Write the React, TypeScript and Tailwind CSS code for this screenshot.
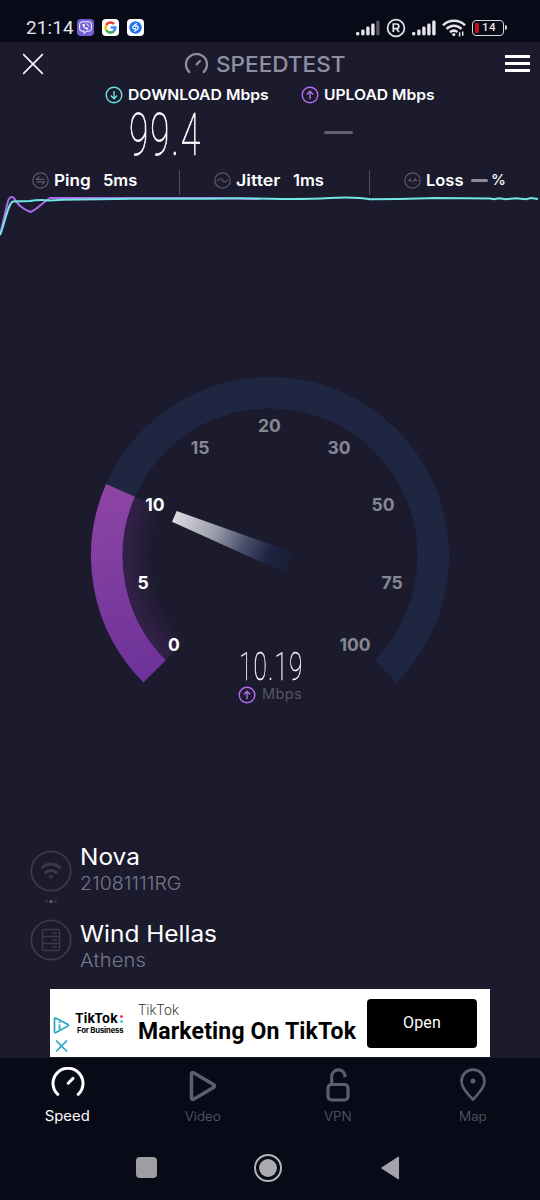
// Speedtest running screen: live results up top, dial in the middle,
// connection details, banner ad and the bottom tabs.

import type { ReactNode } from 'react';
import { clsx } from 'clsx';

interface Mark {
  value: number;
  x: number;
  y: number;
  passed: boolean;
}

const MARKS: Mark[] = [
  { value: 0,   x: 174,   y: 645, passed: true },
  { value: 5,   x: 143,   y: 583, passed: true },
  { value: 10,  x: 155,   y: 505, passed: true },
  { value: 15,  x: 200,   y: 447.5, passed: false },
  { value: 20,  x: 269.5, y: 426, passed: false },
  { value: 30,  x: 339,   y: 448, passed: false },
  { value: 50,  x: 383,   y: 505, passed: false },
  { value: 75,  x: 392,   y: 583, passed: false },
  { value: 100, x: 355,   y: 645, passed: false },
];

function ArrowCircle({ up, className }: { up?: boolean; className?: string }) {
  return (
    <svg viewBox="0 0 18 18" fill="none" stroke="currentColor" className={clsx('size-[18px] shrink-0', className)}>
      <circle cx="9" cy="9" r="7.8" strokeWidth="1.4" />
      <path
        d={up ? 'M9 13V5.4M5.8 8.4L9 5.2l3.2 3.2' : 'M9 5v7.6M5.8 9.6L9 12.8l3.2-3.2'}
        strokeWidth="1.4"
      />
    </svg>
  );
}

function GaugeIcon({ className, width }: { className?: string; width: number }) {
  return (
    <svg viewBox="0 0 34 30" fill="none" stroke="currentColor" strokeWidth={width} strokeLinecap="round" className={className}>
      <path d="M6.8 27.3A15 15 0 1 1 27.2 27.3" />
      <path d="M17.2 16.2L22 11.4" />
    </svg>
  );
}

function SignalBars({ dimLast }: { dimLast?: boolean }) {
  return (
    <svg viewBox="0 0 24 16" fill="#e4e4ea" className="h-4 w-6 shrink-0">
      <rect x="0" y="12" width="3.4" height="3.5" rx="1.4" />
      <rect x="5.2" y="9.5" width="3.4" height="6" rx="1.4" />
      <rect x="10.2" y="6.5" width="3.4" height="9" rx="1.4" />
      <rect x="15.2" y="3.5" width="3.4" height="12" rx="1.4" />
      <rect x="20.2" y="0.5" width="3.4" height="15" rx="1.4" fill={dimLast ? '#55565f' : '#e4e4ea'} />
    </svg>
  );
}

function StatusBar() {
  return (
    <div className="flex h-[42px] items-start bg-[#090a18] pt-[18px] pl-[26px]">
      <span className="w-[51px] font-[Roboto] text-[19px] leading-[20px] tracking-[0.1px] text-[#e4e4ea]">21:14</span>
      <div className="mt-[1px] flex gap-2">
        <svg viewBox="0 0 17 17" className="size-[17px]">
          <rect width="17" height="17" rx="4" fill="#7360d8" />
          <path d="M5.2 2.8h6.6q2.6 0 2.6 2.6v4.2q0 2.6-2.6 2.6H9.4L7.2 14.6v-2.4h-2q-2.6 0-2.6-2.6V5.4q0-2.6 2.6-2.6z" fill="none" stroke="#fff" strokeWidth="1" />
          <path d="M5.6 5.1c-.3 2.6 2.2 5.2 4.9 5.6l1-1.4-1.7-1-.8.7Q7.8 8.3 7.3 7.2l.8-.7-1-1.7z" fill="#fff" />
          <path d="M9 4.8q2.5.2 2.8 2.8" fill="none" stroke="#fff" strokeWidth=".8" />
        </svg>
        <svg viewBox="0 0 17 17" fill="none" strokeWidth="2.5" className="size-[17px]">
          <rect width="17" height="17" rx="4" fill="#fff" />
          <path d="M12.1 5A5 5 0 0 0 4.2 6" stroke="#ea4335" />
          <path d="M4.2 6A5 5 0 0 0 4.2 11" stroke="#fbbc05" />
          <path d="M4.2 11A5 5 0 0 0 11.6 12.5" stroke="#34a853" />
          <path d="M11.6 12.5Q13.3 11 13.4 8.5H8.7" stroke="#4285f4" />
        </svg>
        <svg viewBox="0 0 17 17" fill="none" className="size-[17px]">
          <rect width="17" height="17" rx="4" fill="#fff" />
          <circle cx="8.5" cy="8.5" r="6.2" fill="#1f74ee" />
          <path d="M9.4 4.8L6.8 6.7q-1.8 1.5-.3 3 1 .7 2-.2M7.6 12.2l2.6-1.9q1.8-1.5.3-3-1-.7-2 .2" stroke="#fff" strokeWidth="1.3" strokeLinecap="round" />
        </svg>
      </div>
      <div className="ml-[212px] flex items-center">
        <SignalBars dimLast />
        <svg viewBox="0 0 20 20" fill="none" stroke="#e4e4ea" className="ml-[6px] size-5">
          <circle cx="10" cy="10" r="8.4" strokeWidth="1.7" />
          <path d="M7.3 14V6h3.2a2.3 2.3 0 0 1 0 4.7H7.3M10.5 10.7l2.5 3.3" strokeWidth="1.7" />
        </svg>
        <div className="ml-[6px]">
          <SignalBars />
        </div>
        <svg viewBox="0 0 24 18" fill="none" stroke="#e4e4ea" strokeWidth="2.5" className="ml-[6px] h-[18px] w-6">
          <path d="M1 6.3A15.5 15.5 0 0 1 23 6.3M4.5 10A10.5 10.5 0 0 1 19.5 10M8 13.3A6 6 0 0 1 15.5 13" />
          <circle cx="11.8" cy="15.5" r="1.6" fill="#e4e4ea" stroke="none" />
          <path d="M17.6 17.5v-4.2M20.7 12.5v4.3" strokeWidth="1.5" />
        </svg>
        <div className="mt-[-1px] ml-[6px] flex h-[16px] w-[32px] items-center rounded-[4px] border-[1.5px] border-[#d8d8de] pl-[2px]">
          <div className="h-[10px] w-[4px] rounded-[1px] bg-[#c01018]" />
          <span className="mt-px ml-[3px] font-[Roboto] text-[11.5px] leading-none font-medium tracking-[0.4px] text-[#e4e4ea]">14</span>
        </div>
        <div className="mt-[-1px] ml-px h-[5px] w-[2px] rounded-r bg-[#d8d8de]" />
      </div>
    </div>
  );
}

function Header() {
  return (
    <header className="flex h-[43px] items-center pl-[22px]">
      <svg viewBox="0 0 22 22" stroke="#f2f2f6" strokeWidth="1.7" className="size-[22px]">
        <path d="M1.2 1.2l19.6 19.6M20.8 1.2L1.2 20.8" />
      </svg>
      <GaugeIcon width={3.2} className="mt-[-1px] ml-[140px] h-[21px] w-[25px] text-[#8f8fa2]" />
      <span className="ml-[7px] w-[130px] origin-left scale-x-[1.025] text-[22px] leading-none font-medium text-[#8f8fa2]">SPEEDTEST</span>
      <div className="ml-[159px] flex w-[25px] flex-col gap-[4px]">
        <div className="h-[3px] bg-white" />
        <div className="h-[3px] bg-white" />
        <div className="h-[3px] bg-white" />
      </div>
    </header>
  );
}

function Results() {
  return (
    <section className="flex h-[84px]">
      <div className="w-[301px] pl-[105px]">
        <div className="flex h-[20px] items-center gap-[5px]">
          <ArrowCircle className="text-[#6be3dc]" />
          <span className="origin-left scale-x-[1.085] text-[14.5px] font-semibold whitespace-nowrap text-white">DOWNLOAD Mbps</span>
        </div>
        <div className="ml-[24px] h-[60px] w-[115px] origin-left scale-x-[0.6] font-[Roboto] text-[58.5px] leading-[60px] font-thin tracking-[3.2px] text-white will-change-transform [-webkit-text-stroke:0.7px_white]">99.4</div>
      </div>
      <div>
        <div className="flex h-[20px] items-center gap-[5px]">
          <ArrowCircle up className="text-[#b86af0]" />
          <span className="origin-left scale-x-[1.08] text-[14.5px] font-semibold whitespace-nowrap text-white">UPLOAD Mbps</span>
        </div>
        <div className="mt-[26px] ml-[23px] h-[3px] w-[29px] rounded-full bg-[#62626f]" />
      </div>
    </section>
  );
}

function StatIcon({ children }: { children: ReactNode }) {
  return (
    <svg viewBox="0 0 17 17" fill="none" stroke="#5b5b6d" strokeWidth="1.2" className="size-[17px] shrink-0">
      <circle cx="8.5" cy="8.5" r="7.7" />
      {children}
    </svg>
  );
}

function Stats() {
  return (
    <section className="flex h-[26px] items-center text-[16px] leading-[18px] font-semibold text-white">
      <div className="flex h-[25px] w-[180px] items-center border-r-[1.5px] border-[#4e4e60] pb-[4px] pl-[32px]">
        <StatIcon>
          <path d="M12.5 7.4H4.5l2.8-2.8M4.5 9.9h8l-2.8 2.8" />
        </StatIcon>
        <span className="ml-[5px] w-[49px] origin-left scale-x-[1.07]">Ping</span>
        <span className="origin-left scale-x-[1.03]">5ms</span>
      </div>
      <div className="flex h-[25px] w-[190px] items-center border-r-[1.5px] border-[#4e4e60] pb-[4px] pl-[34px]">
        <StatIcon>
          <path d="M3.5 9.3C5 6 7 6.2 8.5 8.3s3.5 2.4 5-.8" />
        </StatIcon>
        <span className="ml-[5px] w-[57px] origin-left scale-x-[1.11]">Jitter</span>
        <span className="origin-left scale-x-[1.03]">1ms</span>
      </div>
      <div className="flex h-[25px] items-center pb-[4px] pl-[34px]">
        <StatIcon>
          <path d="M3.5 8.5h2l1-1.3.8 2.6M9.5 10l1.5-3.200.8 1.700h2" />
        </StatIcon>
        <span className="ml-[5px] w-[45px] origin-left scale-x-[1.03]">Loss</span>
        <div className="h-[3px] w-[17px] rounded-full bg-[#8d8d9c]" />
        <span className="ml-[3px] text-[15px] font-medium">%</span>
      </div>
    </section>
  );
}

function Graph() {
  return (
    <svg viewBox="0 195 540 45" fill="none" strokeWidth="2" className="block h-[45px] w-[540px]">
      <path d="M0 235L7.5 203Q9 197 11.5 197T15 200L20 206Q25 210 30.5 212Q35 210 39 206.5T50 198H215L260 199" stroke="#a96bea" />
      <path d="M0 235C5 223 8 203 13 201.5L30 201Q38 199.5 50 200.5L63 199.7L133 198.8H210Q235 198 270 198.7T330 198T370 199.3L400 199L436 198L490 198.4L494 199.3L499 198.2L506 199.2L516 198.2L526 199.3L531 198L538 198.9" stroke="#72e6e4" />
    </svg>
  );
}

function Dial() {
  return (
    <section className="pt-[130px]">
      <svg viewBox="0 370 540 320" fill="none" className="block h-[320px] w-[540px]">
        <defs>
          <linearGradient id="arc" gradientUnits="userSpaceOnUse" x1="110" y1="485" x2="150" y2="680">
            <stop offset="0" stopColor="#8e45a4" />
            <stop offset="1" stopColor="#6c3299" />
          </linearGradient>
          <radialGradient id="glow" gradientUnits="userSpaceOnUse" cx="270" cy="556" r="148">
            <stop offset="0.78" stopColor="#7b3199" stopOpacity="0" />
            <stop offset="1" stopColor="#7b3199" stopOpacity="0.27" />
          </radialGradient>
          <linearGradient id="needle" gradientUnits="userSpaceOnUse" x1="174" y1="516" x2="289" y2="563">
            <stop offset="0" stopColor="#dcdce0" />
            <stop offset="0.35" stopColor="#9c9eab" />
            <stop offset="0.6" stopColor="#4a526e" />
            <stop offset="0.82" stopColor="#1c2440" />
            <stop offset="1" stopColor="#1b1f35" />
          </linearGradient>
        </defs>
        <path d="M154.6 671.4A163.25 163.25 0 1 1 385.4 671.4" stroke="#1e2642" strokeWidth="31.5" />
        <path d="M270 556L165.7 660.3A147.5 147.5 0 0 1 134.9 496.7Z" fill="url(#glow)" />
        <path d="M154.6 671.4A163.25 163.25 0 0 1 120.5 490.4" stroke="url(#arc)" strokeWidth="31.5" />
        <path d="M176.7 511L292.7 552.3L285.7 573.3L172 521.7Z" fill="url(#needle)" />
        {MARKS.map((m) => (
          <text
            key={m.value}
            x={m.x}
            y={m.y + 6.2}
            textAnchor="middle"
            className={clsx('text-[17.5px] font-bold', m.passed ? 'fill-white' : 'fill-[#878793]')}
          >
            {m.value}
          </text>
        ))}
      </svg>
      <div className="relative mt-[-42px] flex h-[57px] flex-col items-center">
        <div className="h-[38px] scale-x-[0.62] pl-[3px] font-[Roboto] text-[39px] leading-[38px] font-thin tracking-[2px] text-white will-change-transform [-webkit-text-stroke:0.4px_white]">10.19</div>
        <div className="flex h-[17px] items-center gap-[6px]">
          <ArrowCircle up className="text-[#b86af0]" />
          <span className="text-[14.5px] leading-none tracking-[0.4px] text-[#555563]">Mbps</span>
        </div>
      </div>
    </section>
  );
}

function Connection() {
  return (
    <section className="flex h-[144px] pl-[30px]">
      <svg viewBox="30 845 42 120" fill="none" stroke="#3a3a4c" className="h-[120px] w-[42px]">
        <circle cx="51" cy="871" r="19.7" strokeWidth="1.8" />
        <path d="M42 867.5Q51 860.5 60 867.5M45.5 872.5Q51 868.5 56.5 872.5" strokeWidth="2.8" strokeLinecap="round" />
        <path d="M48.8 876h4.4L51 878.6z" fill="#3a3a4c" strokeWidth="1" />
        <g fill="#3a3a4c" stroke="none">
          <circle cx="46.5" cy="901.5" r="1.3" />
          <circle cx="51" cy="901.5" r="1.5" fill="#6a6a7a" />
          <circle cx="55.5" cy="901.5" r="1.3" />
        </g>
        <circle cx="51" cy="940" r="19.7" strokeWidth="1.8" />
        <rect x="42.5" y="929.5" width="17" height="21" rx="2" strokeWidth="1.6" />
        <path d="M42.5 936.5h17M42.5 943.5h17M52 933h5M52 940h5M52 947h5" strokeWidth="1.5" />
      </svg>
      <div className="mt-[-1px] ml-[8px] origin-left scale-x-[1.085] whitespace-nowrap">
        <div className="text-[22.5px] leading-[26px] text-white">Nova</div>
        <div className="mt-px text-[18px] leading-[26px] font-light text-[#77778a]">21081111RG</div>
        <div className="mt-[24px] text-[22.5px] leading-[26px] text-white">Wind Hellas</div>
        <div className="text-[18.5px] leading-[26px] font-light tracking-[0.2px] text-[#77778a]">Athens</div>
      </div>
    </section>
  );
}

function BannerAd() {
  return (
    <section className="mx-[50px] mb-px flex h-[68px] bg-white font-[Roboto] text-black">
      <div className="w-[22px] pt-[28px] pl-[3px]">
        <svg viewBox="0 0 18 36" fill="none" stroke="#22a7bd" strokeWidth="1.7" className="h-9 w-[18px]">
          <path d="M1.5 2Q1.5 .6 3 1.3L15 7.5Q16 8.2 15 8.9L3 15.5Q1.5 16.2 1.5 15z" />
          <path d="M6.5 7.5v5M6.5 4.5v1.6" />
          <path d="M3 23.5l11 11M14 23.5l-11 11" />
        </svg>
      </div>
      <div className="w-[66px] pt-[22px] pl-[3px] font-[Inter] leading-none whitespace-nowrap">
        <div className="flex items-center text-[13px] leading-[15px] font-bold tracking-[0.1px]">
          TikTok
          <span className="ml-[2px] flex flex-col gap-[2px]">
            <span className="size-[3px] rounded-full bg-[#f0305a]" />
            <span className="size-[3px] rounded-full bg-[#35d8d8]" />
          </span>
        </div>
        <div className="pl-[2px] text-[7.7px] leading-[9px] font-bold tracking-[-0.15px]">For Business</div>
      </div>
      <div className="w-[229px] pt-[13px] whitespace-nowrap">
        <div className="text-[14px] leading-[16px] font-light text-[#333]">TikTok</div>
        <div className="text-[23px] leading-[27px] font-bold tracking-[0.16px]">Marketing On TikTok</div>
      </div>
      <div className="mt-[10px] flex h-[49px] w-[110px] items-center justify-center rounded-[4px] bg-black pb-px text-[16px] tracking-[0.2px] text-white">
        Open
      </div>
    </section>
  );
}

function Tab({ label, active, children }: { label: string; active?: boolean; children: ReactNode }) {
  return (
    <div className={clsx('flex w-[135px] flex-col items-center', active ? 'text-white' : 'text-[#5d5d6e]')}>
      <div className="flex h-[54px] items-center">{children}</div>
      <span className={clsx('mt-[-5px] leading-[18px]', active ? 'scale-x-[1.06] text-[14px]' : 'mb-[-1px] scale-x-[1.08] pt-px text-[12.5px] font-light')}>
        {label}
      </span>
    </div>
  );
}

function BottomBar() {
  return (
    <footer className="h-[142px] bg-[#090a18]">
      <nav className="flex h-[89px]">
        <Tab label="Speed" active>
          <GaugeIcon width={3} className="mt-[-6px] h-[30px] w-[34px]" />
        </Tab>
        <Tab label="Video">
          <svg viewBox="0 0 28 32" fill="none" stroke="currentColor" strokeWidth="3.6" strokeLinejoin="round" className="mt-[1px] h-8 w-7">
            <path d="M2.5 4.3Q2.5 1.7 5 3L24.5 14.5Q26.5 16 24.5 17.5L5 29Q2.5 30.2 2.5 27.7z" />
          </svg>
        </Tab>
        <Tab label="VPN">
          <svg viewBox="0 0 24 34" fill="none" stroke="currentColor" strokeWidth="3.2" className="h-[34px] w-6">
            <rect x="2" y="16.5" width="20" height="15.5" rx="3.5" />
            <path d="M5.7 16V8.5a6.7 6.7 0 0 1 13.3-1v1.8" />
          </svg>
        </Tab>
        <Tab label="Map">
          <svg viewBox="0 0 28 34" fill="none" stroke="currentColor" strokeWidth="2.7" className="h-[34px] w-7">
            <path d="M14 31.5Q9 26.5 5.5 21.5Q2.5 17 2.5 13.2a11.5 11.5 0 0 1 23 0Q25.5 17 22.5 21.5Q19 26.5 14 31.5z" />
            <circle cx="14" cy="13" r="2.5" fill="currentColor" stroke="none" />
          </svg>
        </Tab>
      </nav>
      <div className="flex h-[41px] items-center pl-[136px]">
        <div className="size-[21px] rounded-[4px] bg-[#9d9da2]" />
        <div className="ml-[97px] flex size-[28px] items-center justify-center rounded-full border-2 border-[#b4b4ba]">
          <div className="size-[18px] rounded-full bg-[#a9a9af]" />
        </div>
        <svg viewBox="0 0 20 24" fill="#a3a3a9" stroke="#a3a3a9" strokeLinejoin="round" className="ml-[98px] h-6 w-5">
          <path d="M1.5 12L18.5 1v22z" />
        </svg>
      </div>
    </footer>
  );
}

export default function App() {
  return (
    <div className="flex h-[1200px] w-[540px] flex-col overflow-hidden bg-[#1b1b2d] font-[Inter,sans-serif]">
      <StatusBar />
      <Header />
      <Results />
      <Stats />
      <Graph />
      <Dial />
      <div className="h-[140px]" />
      <Connection />
      <BannerAd />
      <BottomBar />
    </div>
  );
}
